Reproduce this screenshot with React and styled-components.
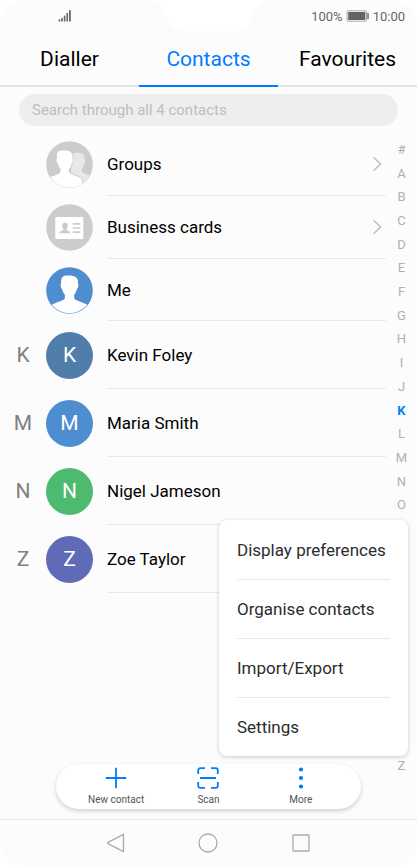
import React, { useState } from "react";
import styled, { createGlobalStyle } from "styled-components";

const tabs = ["Dialler", "Contacts", "Favourites"];
const contacts = [
  { name: "Kevin Foley", color: "#517dab" },
  { name: "Maria Smith", color: "#4f8dd1" },
  { name: "Nigel Jameson", color: "#4eba6f" },
  { name: "Zoe Taylor", color: "#5f6bb7" },
];
const letters = "#ABCDEFGHIJKLMNOPQRSTUVWXYZ".split("");
const menuItems = [
  "Display preferences",
  "Organise contacts",
  "Import/Export",
  "Settings",
];

// icons
const SignalIcon = () => (
  <svg width="14" height="14" viewBox="0 0 14 14" fill="#666" aria-hidden="true">
    <rect x="0.5" y="10.5" width="1.8" height="2" />
    <rect x="3.2" y="9" width="1.6" height="3.5" />
    <rect x="5.8" y="6.6" width="1.6" height="5.9" />
    <rect x="8.4" y="4" width="1.6" height="8.5" />
    <rect x="11" y="1.2" width="1.8" height="11.3" />
  </svg>
);
const BatteryIcon = () => (
  <svg width="24" height="12" viewBox="0 0 24 12" aria-hidden="true">
    <rect x="1" y="0.8" width="19.6" height="10.4" rx="1" fill="#fff" stroke="#a5a5a5" />
    <rect x="2.2" y="2" width="17.2" height="8" fill="#636363" />
    <path d="M21.2 3h1.6v6h-1.6z" fill="#777" />
  </svg>
);
const headPath =
  "M18 9C19.2 8.5 21 8.5 23.2 8.5C28.5 8.5 32 10.5 32 15C32 15.8 32 16 31.9 17C32.7 17.1 32.6 18.6 32 20.2C31.7 21.2 31.4 21.6 31 21.7C30.5 24.3 29.5 26 28.2 27.5V31.4C29 33.8 37.5 35 41.7 38L47 47H0L5.3 38C9.5 35 18 33.8 18.8 31.4V27.5C17.5 26 16.5 24.3 16 21.7C15.6 21.6 15.3 21.2 15 20.2C14.4 18.6 14.3 17.1 15.1 17C14.7 13 15.5 10 18 9Z";
const MeIcon = () => (
  <svg width="47" height="47" viewBox="0 0 47 47" aria-hidden="true">
    <defs>
      <clipPath id="meClip">
        <circle cx="23.5" cy="23.5" r="22.8" />
      </clipPath>
    </defs>
    <circle cx="23.5" cy="23.5" r="23.3" fill="#4f8dd1" />
    <path d={headPath} fill="#fff" clipPath="url(#meClip)" />
  </svg>
);
const GroupsIcon = () => (
  <svg width="47" height="47" viewBox="0 0 47 47" aria-hidden="true">
    <defs>
      <clipPath id="groupClip">
        <circle cx="23.5" cy="23.5" r="22.9" />
      </clipPath>
    </defs>
    <circle cx="23.5" cy="23.5" r="23.3" fill="#ccc" />
    <g clipPath="url(#groupClip)">
      <path
        d="M26 13.5C28 11.8 31 11.5 33 11.8C37.5 12 39 14.5 38.8 19.2C39.6 19.5 39.2 22 38.3 23C37.9 25 37 26.6 35.9 27.5V30.5C37 32.8 41.5 33.3 45 35V47H24Z"
        fill="#e8e8e8"
      />
      <path
        d="M13 9.8C15 8.8 17 9 19 9C24.5 9 27.4 11.5 27 17.4C28 18 27.5 21 26.2 22.3C25.7 24.7 24.8 26.4 23.5 27.7V31C24.8 33.8 33 34.5 35.4 37.5C36.5 39 37 41 37.2 43L34 48H0V37C5 34.5 12.7 34 14 31V27.7C12.7 26.4 11.8 24.7 11.3 22.3C9.9 21 9.5 18 10.5 17.4C10 13.5 10.5 11 13 9.8Z"
        fill="#fff"
        stroke="#ccc"
        strokeWidth="1"
      />
    </g>
  </svg>
);
const CardIcon = () => (
  <svg width="47" height="47" viewBox="0 0 47 47" aria-hidden="true">
    <circle cx="23.5" cy="23.5" r="23.3" fill="#ccc" />
    <rect x="9.3" y="13" width="28" height="22" rx="1" fill="#fff" />
    <path
      d="M19 18.5C21 18.5 22 19.8 21.8 21.8C21.6 23.5 21 24.2 20.6 24.8V26C21 26.8 24.3 27 24.3 29.2H13.3C13.3 27 17 26.8 17.3 26V24.8C16.7 24.2 16.2 23.5 16.1 21.8C16 19.8 17 18.5 19 18.5Z"
      fill="#ccc"
    />
    <path d="M26.7 19.8h7.5M26.7 24h7.5M26.7 28.2h7.5" stroke="#ccc" strokeWidth="1.7" />
  </svg>
);
const ChevronIcon = () => (
  <svg width="10" height="16" viewBox="0 0 10 16" fill="none" aria-hidden="true">
    <path d="M1.5 1.2L8.6 8L1.5 14.8" stroke="#bdbdbd" strokeWidth="1.5" />
  </svg>
);
const PlusIcon = () => (
  <svg width="22" height="22" viewBox="0 0 22 22" aria-hidden="true">
    <path d="M11 0.8v20.4M0.8 11h20.4" stroke="#007dff" strokeWidth="1.8" />
  </svg>
);
const ScanIcon = () => (
  <svg width="22" height="22" viewBox="0 0 22 22" fill="none" aria-hidden="true">
    <path
      d="M1.2 7V3.2a2 2 0 0 1 2-2H8M14 1.2h4.800a2 2 0 0 1 2 2V7M20.8 15v3.800a2 2 0 0 1-2 2H14M8 20.8H3.2a2 2 0 0 1-2-2V15M3 11h16"
      stroke="#007dff"
      strokeWidth="1.8"
    />
  </svg>
);
const MoreIcon = () => (
  <svg width="22" height="22" viewBox="0 0 22 22" fill="#007dff" aria-hidden="true">
    <circle cx="11" cy="2.5" r="2.1" />
    <circle cx="11" cy="11" r="2.1" />
    <circle cx="11" cy="19.5" r="2.1" />
  </svg>
);

const App = () => {
  const [tab, setTab] = useState("Contacts");
  const [menuOpen, setMenuOpen] = useState(true);

  return (
    <>
      <GlobalStyle />
      <Screen>
        <StatusBar>
          <SignalIcon />
          {/* camera cutout */}
          <Notch viewBox="0 0 120 31" aria-hidden="true">
            <path d="M0 0C10 0 12 6 17 17C21 26 25 31 36 31H84C95 31 99 26 103 17C108 6 110 0 120 0Z" fill="#fff" />
          </Notch>
          <StatusInfo>
            <span>100%</span>
            <BatteryIcon />
            <span>10:00</span>
          </StatusInfo>
        </StatusBar>
        <Tabs>
          {tabs.map((name) => (
            <Tab key={name} $active={name === tab} onClick={() => setTab(name)}>
              {name}
            </Tab>
          ))}
        </Tabs>
        <Main>
          <Search type="text" aria-label="Search contacts" placeholder="Search through all 4 contacts" />
          <Content>
            <List>
              <Row $height={63}>
                <Avatar><GroupsIcon /></Avatar>
                <RowButton>Groups<ChevronIcon /></RowButton>
              </Row>
              <Row $height={63}>
                <Avatar><CardIcon /></Avatar>
                <RowButton>Business cards<ChevronIcon /></RowButton>
              </Row>
              <Row $height={62}>
                <Avatar><MeIcon /></Avatar>
                <RowButton>Me</RowButton>
              </Row>
              {contacts.map(({ name, color }) => (
                <Row key={name} $height={68}>
                  <Letter>{name[0]}</Letter>
                  <Avatar $color={color}>{name[0]}</Avatar>
                  <RowButton>{name}</RowButton>
                </Row>
              ))}
            </List>
            <Index aria-label="Alphabet">
              {letters.map((letter) => (
                <IndexLink key={letter} href={`#${letter}`} $active={letter === "K"}>
                  {letter}
                </IndexLink>
              ))}
            </Index>
          </Content>
          <Toolbar>
            <Tool><PlusIcon />New contact</Tool>
            <Tool><ScanIcon />Scan</Tool>
            <Tool aria-expanded={menuOpen} onClick={() => setMenuOpen(!menuOpen)}>
              <MoreIcon />More
            </Tool>
          </Toolbar>
          {menuOpen && (
            <Menu>
              {menuItems.map((item) => (
                <MenuItem key={item}>{item}</MenuItem>
              ))}
            </Menu>
          )}
        </Main>
        <NavBar>
          <NavKeys>
            <NavKey aria-label="Back">
              <svg width="20" height="20" viewBox="0 0 20 20" fill="none">
                <path d="M17.5 1.3V18.7L2 10.6Q1 10 2 9.4Z" stroke="#aaa" strokeWidth="1.3" strokeLinejoin="round" />
              </svg>
            </NavKey>
            <NavKey aria-label="Home">
              <svg width="20" height="20" viewBox="0 0 20 20" fill="none">
                <circle cx="10" cy="10" r="9" stroke="#aaa" strokeWidth="1.3" />
              </svg>
            </NavKey>
            <NavKey aria-label="Recents">
              <svg width="20" height="20" viewBox="0 0 20 20" fill="none">
                <rect x="2" y="2" width="16" height="16" rx="0.8" stroke="#aaa" strokeWidth="1.3" />
              </svg>
            </NavKey>
          </NavKeys>
        </NavBar>
      </Screen>
    </>
  );
};

const GlobalStyle = createGlobalStyle`
  * {
    box-sizing: border-box;
  }
  body {
    margin: 0;
    background: #fff;
    font-family: Roboto, sans-serif;
  }
  button {
    margin: 0;
    padding: 0;
    border: none;
    background: none;
    font-family: inherit;
    cursor: pointer;
  }
  svg {
    display: block;
    flex-shrink: 0;
  }
`;
const Screen = styled.div`
  min-height: 100vh;
  display: flex;
  flex-direction: column;
  background: #fcfcfc;
  border-radius: 24px;
  overflow: hidden;
`;
const StatusBar = styled.header`
  position: relative;
  height: 32px;
  padding: 0 12px 0 58px;
  display: flex;
  align-items: center;
  justify-content: space-between;
`;
const Notch = styled.svg`
  position: absolute;
  top: 0;
  left: 50%;
  width: 120px;
  height: 31px;
  transform: translateX(-50%);
`;
const StatusInfo = styled.div`
  display: flex;
  align-items: center;
  gap: 3px;
  font-size: 13px;
  color: #666;
`;
const Tabs = styled.nav`
  height: 55px;
  display: grid;
  grid-template-columns: repeat(3, 1fr);
`;
const Tab = styled.button`
  font-size: 21px;
  color: ${({ $active }) => ($active ? "#007dff" : "#000")};
  border-bottom: 2px solid ${({ $active }) => ($active ? "#007dff" : "#e2e2e2")};
`;
const Main = styled.main`
  position: relative;
  flex: 1;
  display: flex;
  flex-direction: column;
  padding-top: 7px;
`;
const Search = styled.input`
  height: 32px;
  margin: 0 19px;
  padding: 0 13px;
  border: none;
  border-radius: 16px;
  outline: none;
  background: #eee;
  font-family: inherit;
  font-size: 15px;
  &::placeholder {
    color: #bebebe;
    opacity: 1;
  }
`;
const Content = styled.div`
  flex: 1;
  display: flex;
`;
const List = styled.ul`
  flex: 1;
  margin: 0;
  padding: 7px 0 0;
  list-style: none;
`;
const Row = styled.li`
  height: ${({ $height }) => $height}px;
  display: grid;
  grid-template-columns: 46px 47px 1fr;
  align-items: center;
`;
const Letter = styled.span`
  text-align: center;
  font-size: 21px;
  color: #808080;
`;
const Avatar = styled.span`
  grid-column: 2;
  height: 47px;
  display: flex;
  align-items: center;
  justify-content: center;
  border-radius: 50%;
  background: ${({ $color }) => $color || "none"};
  color: #fff;
  font-size: 21px;
`;
const RowButton = styled.button`
  height: 100%;
  margin-left: 14px;
  padding-right: 4px;
  display: flex;
  align-items: center;
  justify-content: space-between;
  border-bottom: 1px solid #e8e8e8;
  font-size: 17px;
  color: #000;
`;
const Index = styled.nav`
  width: 31px;
  padding: 12px 0 41px;
  display: flex;
  flex-direction: column;
`;
const IndexLink = styled.a`
  flex: 1;
  display: flex;
  align-items: center;
  justify-content: center;
  text-decoration: none;
  font-size: 13px;
  line-height: 16px;
  font-weight: ${({ $active }) => ($active ? 700 : 400)};
  color: ${({ $active }) => ($active ? "#007dff" : "#b0b0b0")};
`;
const Toolbar = styled.div`
  position: absolute;
  bottom: 10px;
  left: 56px;
  right: 56px;
  height: 45px;
  padding: 0 14px;
  display: grid;
  grid-template-columns: repeat(3, 1fr);
  border-radius: 23px;
  background: #fff;
  box-shadow: 0 2px 4px rgba(0, 0, 0, 0.18);
`;
const Tool = styled.button`
  display: flex;
  flex-direction: column;
  align-items: center;
  gap: 4px;
  padding-top: 3px;
  font-size: 10px;
  line-height: 14px;
  color: #555;
`;
const Menu = styled.div`
  position: absolute;
  right: 9px;
  bottom: 63px;
  min-width: 189px;
  padding: 0 18px;
  display: flex;
  flex-direction: column;
  border-radius: 8px;
  background: #fff;
  box-shadow: 0 1px 4px rgba(0, 0, 0, 0.2);
`;
const MenuItem = styled.button`
  height: 59px;
  text-align: left;
  font-size: 17px;
  color: #2c2c2c;
  & + & {
    border-top: 1px solid #e8e8e8;
  }
`;
const NavBar = styled.footer`
  height: 47px;
  display: flex;
  justify-content: center;
  border-top: 1px solid #e6e6e6;
`;
const NavKeys = styled.div`
  width: calc(100% * 2 / 3);
  display: grid;
  grid-template-columns: repeat(3, 1fr);
`;
const NavKey = styled.button`
  display: flex;
  align-items: center;
  justify-content: center;
`;
export default App;
